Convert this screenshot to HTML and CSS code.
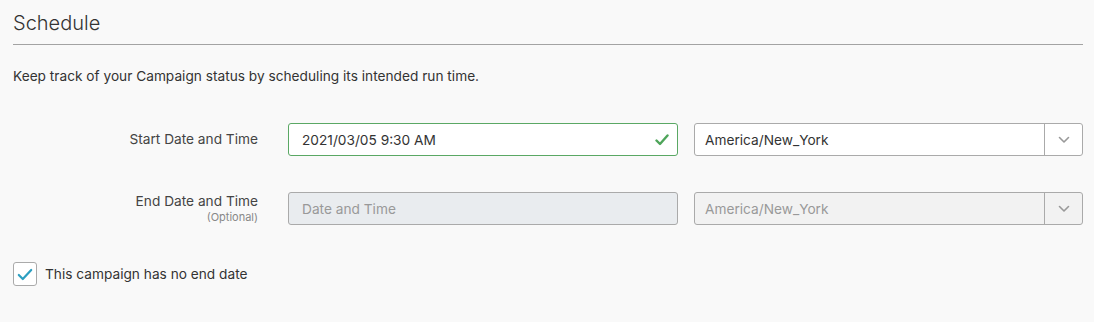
FILE: index.html
```html
<!DOCTYPE html>
<html>
<head>
<meta charset="utf-8">
<link rel="stylesheet" href="styles.css">
</head>
<body>
<div class="page">
  <h2 class="title">Schedule</h2>
  <p class="desc">Keep track of your Campaign status by scheduling its intended run time.</p>
  <div class="form">
    <div class="label"><span>Start Date and Time</span></div>
    <div class="input valid">
      <span class="value">2021/03/05 9:30 AM</span>
      <svg class="ok" width="14" height="12" viewBox="0 0 14 12"><path d="M1.5 6.5 L5 10 L12.5 1.5" fill="none" stroke="#4ea55a" stroke-width="2.4" stroke-linecap="round" stroke-linejoin="round"/></svg>
    </div>
    <div class="select">
      <span class="value">America/New_York</span>
      <span class="arrow"><svg width="12" height="8" viewBox="0 0 12 8"><path d="M1.5 1.5 L6 6 L10.5 1.5" fill="none" stroke="#999" stroke-width="1.6" stroke-linecap="round" stroke-linejoin="round"/></svg></span>
    </div>

    <div class="label"><span>End Date and Time</span><small>(Optional)</small></div>
    <div class="input disabled">
      <span class="placeholder">Date and Time</span>
    </div>
    <div class="select disabled">
      <span class="value">America/New_York</span>
      <span class="arrow"><svg width="12" height="8" viewBox="0 0 12 8"><path d="M1.5 1.5 L6 6 L10.5 1.5" fill="none" stroke="#999" stroke-width="1.6" stroke-linecap="round" stroke-linejoin="round"/></svg></span>
    </div>
  </div>
  <label class="check">
    <span class="box"><svg width="16" height="13" viewBox="0 0 16 13"><path d="M1.8 7 L5.8 11 L14.2 2" fill="none" stroke="#2c9fc1" stroke-width="2.2" stroke-linecap="round" stroke-linejoin="round"/></svg></span>
    <span>This campaign has no end date</span>
  </label>
</div>
</body>
</html>
```
FILE: styles.css
```css
html, body {
  margin: 0;
  padding: 0;
  background: #f9f9f9;
}
body {
  font-family: Inter, "Noto Sans", sans-serif;
  color: #333;
}
.page {
  padding: 9px 11px 0 13px;
}
.title {
  margin: 0;
  font-size: 20px;
  font-weight: 300;
  line-height: 28px;
  color: #333;
  padding-bottom: 7px;
  border-bottom: 1px solid #a3a3a3;
}
.desc {
  margin: 21px 0 0 0;
  font-size: 13.7px;
  line-height: 20px;
  color: #333;
}
.form {
  margin-top: 37px;
  display: grid;
  grid-template-columns: 259px 390px 389px;
  column-gap: 16px;
  row-gap: 36px;
  align-items: center;
}
.label {
  padding-right: 14px;
  display: flex;
  flex-direction: column;
  align-items: flex-end;
  font-size: 13.7px;
  line-height: 17px;
  color: #444;
}
.label small {
  font-size: 11px;
  line-height: 14px;
  color: #888;
}
.input, .select {
  box-sizing: border-box;
  height: 33px;
  border: 1px solid #aaa;
  border-radius: 3px;
  background: #fff;
  display: flex;
  align-items: center;
  font-size: 13.7px;
  color: #333;
}
.input {
  padding: 0 8px 0 13px;
  justify-content: space-between;
}
.input.valid {
  border-color: #5aa864;
}
.input.disabled {
  background: #e9ecef;
}
.placeholder {
  color: #999;
}
.select {
  padding-left: 10px;
}
.select .value {
  flex: 1;
}
.select .arrow {
  width: 37px;
  align-self: stretch;
  border-left: 1px solid #aaa;
  display: flex;
  align-items: center;
  justify-content: center;
}
.select.disabled {
  background: #f2f2f2;
}
.select.disabled .value {
  color: #999;
}
.check {
  margin-top: 37px;
  display: flex;
  align-items: center;
  gap: 8px;
  font-size: 13.7px;
  color: #333;
}
.box {
  box-sizing: border-box;
  width: 24px;
  height: 24px;
  border: 1px solid #aaa;
  border-radius: 3px;
  background: #fff;
  display: flex;
  align-items: center;
  justify-content: center;
}
```
